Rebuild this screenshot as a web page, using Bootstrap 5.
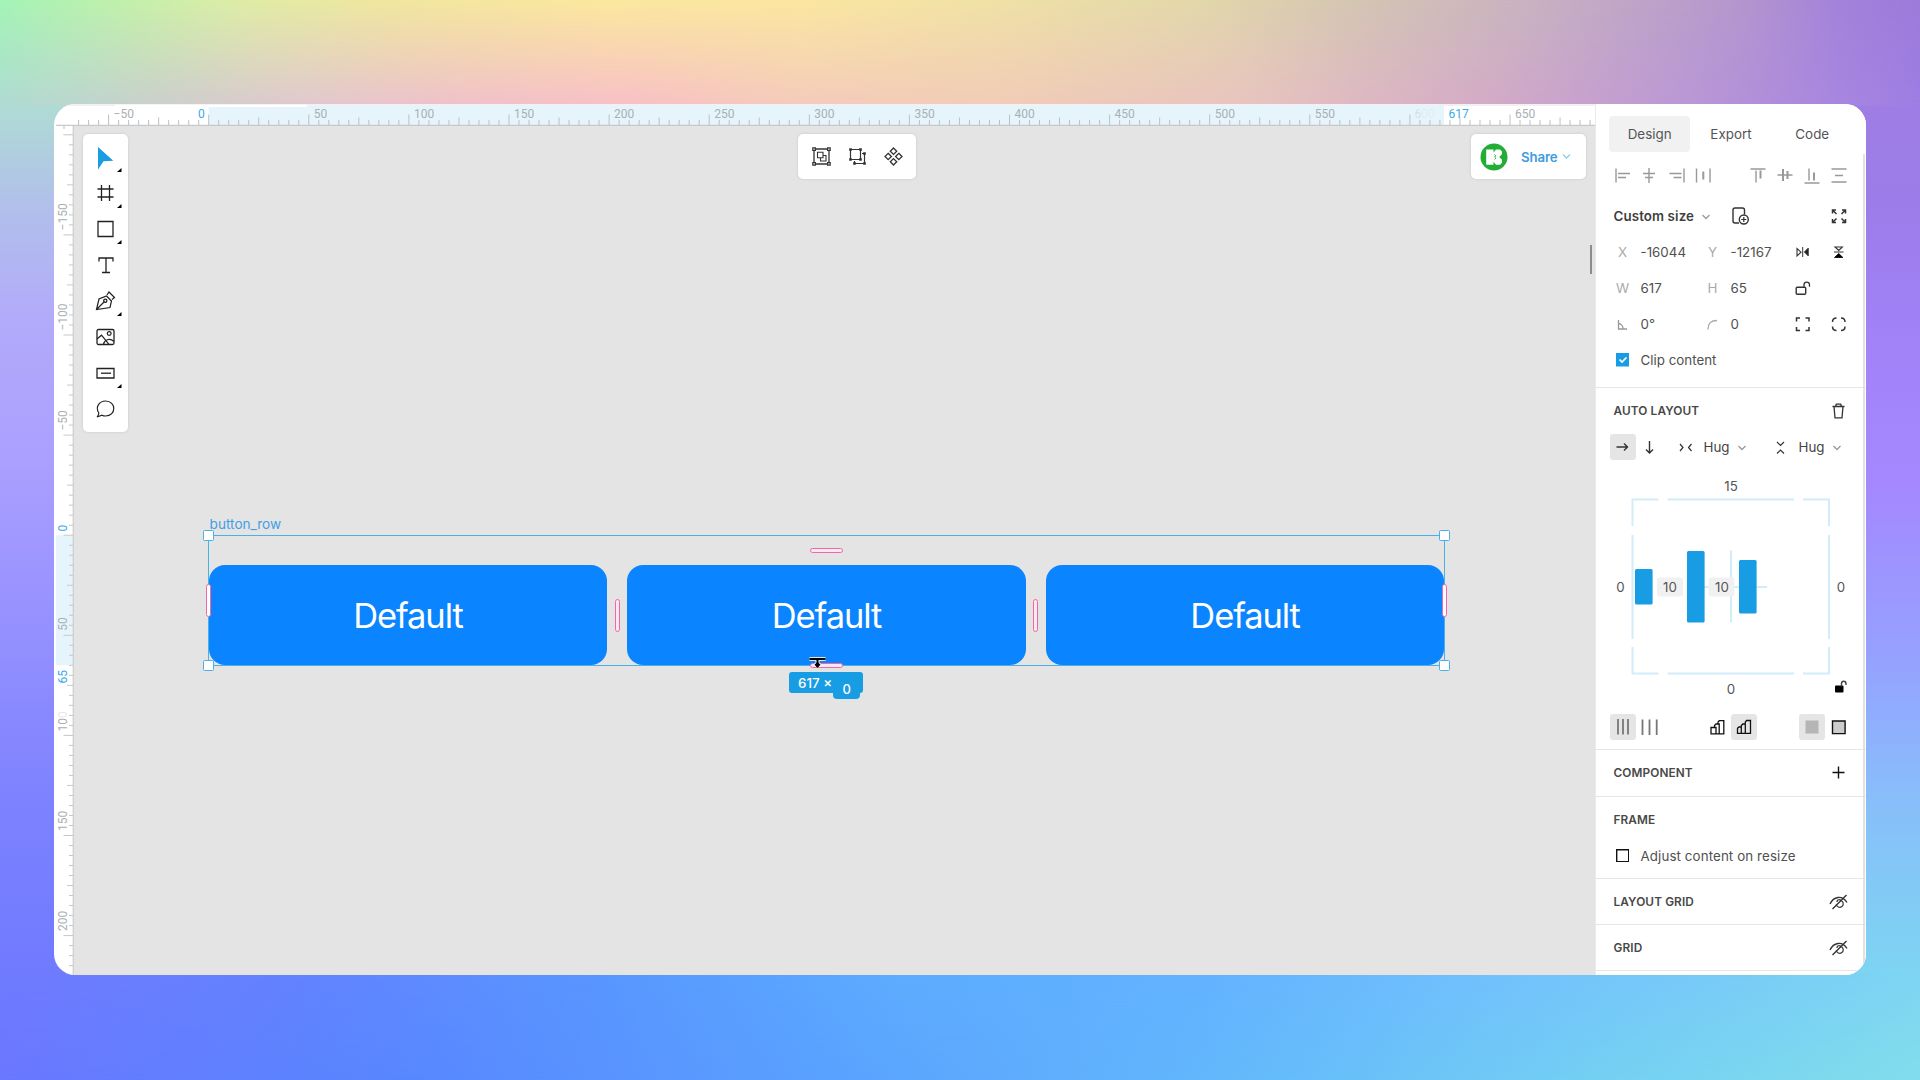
<!DOCTYPE html>
<html lang="en">
<head>
<meta charset="utf-8">
<title>Design editor</title>
<link href="https://cdn.jsdelivr.net/npm/bootstrap@5.3.0/dist/css/bootstrap.min.css" rel="stylesheet">
<style>
:root{--accent:#189ce4;--ink:#333;}
html,body{height:100%}
body{width:1920px;height:1080px;overflow:hidden;font-family:Inter,Roboto,sans-serif;font-size:13.35px;color:#4a4a4a;
 background:
 linear-gradient(180deg,rgb(175,220,212) 104px,rgb(177,193,233) 200px,rgb(178,170,250) 320px,rgb(172,160,255) 450px,rgb(150,145,255) 620px,rgb(125,130,255) 800px,rgb(112,122,255) 975px) left/50% 100% no-repeat,
 linear-gradient(180deg,rgb(158,126,228) 104px,rgb(156,124,232) 200px,rgb(161,130,247) 330px,rgb(165,135,255) 480px,rgb(150,160,255) 650px,rgb(136,190,250) 800px,rgb(125,212,242) 975px) right/50% 100% no-repeat;}
.glow{position:absolute;left:0;width:1920px;z-index:-1}
.glow::after{content:"";position:absolute;inset:0}
.glow-top{top:0;height:106px;background:linear-gradient(90deg,rgb(175,220,212),rgb(203,208,205) 150px,rgb(225,200,208) 300px,rgb(240,193,203) 450px,rgb(248,192,200) 620px,rgb(245,203,188) 800px,rgb(242,204,184) 1000px,rgb(232,196,192) 1250px,rgb(210,170,200) 1500px,rgb(185,150,215) 1700px,rgb(166,133,225) 1850px,rgb(158,126,228))}
.glow-top::after{background:linear-gradient(90deg,rgb(163,243,182),rgb(193,240,170) 122px,rgb(222,236,165) 245px,rgb(240,230,158) 390px,rgb(251,231,158) 600px,rgb(250,230,160) 800px,rgb(240,225,165) 980px,rgb(226,215,170) 1200px,rgb(212,197,178) 1350px,rgb(200,178,192) 1530px,rgb(180,150,205) 1740px,rgb(162,130,218) 1840px,rgb(155,122,218));-webkit-mask:linear-gradient(#000,transparent);mask:linear-gradient(#000,transparent)}
.glow-bottom{top:974px;height:106px;background:linear-gradient(90deg,rgb(106,120,255),rgb(88,135,255) 400px,rgb(90,160,255) 800px,rgb(98,183,252) 1200px,rgb(116,208,243) 1600px,rgb(130,222,236))}
.glow-bottom::after{background:linear-gradient(90deg,rgb(112,122,255),rgb(98,130,255) 300px,rgb(88,150,255) 600px,rgb(92,172,255) 900px,rgb(98,178,255) 1200px,rgb(113,193,252) 1500px,rgb(125,212,242));-webkit-mask:linear-gradient(#000,transparent);mask:linear-gradient(#000,transparent)}
.editor{margin:104px 54px 0;width:1812px;height:871px;border-radius:21px;overflow:hidden;background:#fff}
.ruler-text{font:12px Roboto,sans-serif;fill:#a9afb2}
.board{width:1521px;height:849px;background:#e4e4e4;overflow:hidden}
.floatbox{position:absolute;background:#fff;border-radius:5px;box-shadow:0 0 3px rgba(0,0,0,.13)}
.tools{left:9px;top:8px;width:45px;height:298px;padding-top:4.5px}
.tool-btn{width:45px;height:36.15px;margin-left:-.5px}
.quick{left:724px;top:8px;width:118px;height:45px;padding:0 5px}
.quick svg{margin:0 4.5px}
.share{left:1397px;top:8px;width:115px;height:45px;padding-left:8.5px}
.share-label{color:#3d9ce2;font-weight:600;margin:2px 5px 0 13.5px;font-size:13.2px;letter-spacing:-.1px}
.scrollstub{position:absolute;left:1516px;top:119px;width:2px;height:29px;background:#8c8c8c}
.artframe{position:absolute;left:134.6px;top:409px;width:1235.8px;height:130.2px}
.artframe .outline{position:absolute;left:-.5px;top:-.5px;right:-.5px;bottom:-1px;border:1.5px solid #49b0e8;pointer-events:none}
.art-label{position:absolute;left:1px;top:-20.5px;color:#3f9fe3;font-size:13.6px;line-height:18px;letter-spacing:0}
.art-btn{height:100px;border-radius:16px;background:#0a84ff;color:#fff;font-size:34.5px;font-weight:400;letter-spacing:-1.1px;padding-top:1px;flex:1 1 0}
.handle{position:absolute;width:11px;height:11px;background:#fff;border:1.5px solid #49b0e8;border-radius:1.5px}
.pill{position:absolute;background:#fbe9f1;border:1.4px solid #f067a6;border-radius:2.5px}
.pill-h{width:33px;height:5px}.pill-v{width:5px;height:33px}
.sizetag{position:absolute;left:580.5px;top:137px;width:74px;height:20.5px;background:var(--accent);color:#fff;border-radius:3px;padding-left:9px;line-height:22px;font-size:13.4px;font-weight:500}
.hinttag{position:absolute;left:624.5px;top:144.5px;width:27px;height:19px;background:var(--accent);color:#fff;border-radius:4px;line-height:19px;font-size:13px;text-align:center;font-weight:500}
.cursor-t{position:absolute;left:599px;top:121px}
.side{width:271px;border-left:1px solid #eaeaea;position:relative;background:#fff}
.side-scroll{position:absolute;right:1px;top:50px;bottom:0;width:2px;background:#e2e2e2}
.tab-item{width:81.3px;height:36px;border-radius:4px;font-size:13.4px;color:#555}
.tab-item.active{background:#f1f1f1}
.line36{height:36px;padding-left:13px}
.cell{width:27px;flex:none;text-align:center;padding-top:1px}
.cell27{width:27.1px;flex:none}
.val{width:63px;padding-left:4.5px;padding-top:1px;flex:none;white-space:nowrap;color:#505050}
.key{color:#aaa}
.head{font-weight:600;font-size:11.8px;color:#484848;padding-left:17.5px;padding-right:14px;letter-spacing:.12px}
.head span{padding-top:2px}
.rule{border-bottom:1.5px solid #e6e6e6}
.on{background:#e5e5e5;border-radius:3px}
svg{display:block;flex:none}
.ic{width:27px;height:27px;fill:none;stroke:#333;stroke-width:1.4}
.ic-soft{stroke:#999}
.tick-box{width:13.5px;height:13.5px;margin:0 6.75px}
.dia text{font:13.3px Inter,sans-serif;fill:#555;text-anchor:middle}
</style>
</head>
<body>
<div class="glow glow-top"></div><div class="glow glow-bottom"></div>
<main class="editor d-flex">
 <section class="d-flex flex-column">
  <svg id="rulerX" width="1541" height="22" viewBox="54 104 1541 22"></svg>
  <div class="d-flex">
   <svg id="rulerY" width="20" height="849" viewBox="54 126 20 849"></svg>
   <div class="board position-relative">
    <div class="floatbox tools d-flex flex-column" id="tools"></div>
    <div class="floatbox quick d-flex align-items-center">
     <svg class="ic" viewBox="0 0 27 27"><path d="M6 6h15v15H6z" stroke-width="1.3"/><g fill="#fff" stroke-width="1.2"><path d="M4.8 4.8h2.6v2.6H4.8zM19.6 4.8h2.6v2.6h-2.6zM4.8 19.6h2.6v2.6H4.8zM19.6 19.6h2.6v2.6h-2.6z"/></g><path d="M9.5 9.3h5.5v5.5H9.5zM12.5 15v3h5.5v-5.5H15" stroke-width="1.1"/></svg>
     <svg class="ic" viewBox="0 0 27 27"><path d="M6.5 6.5h10v10h-10zM18 10.5h2.5v10h-10V18" stroke-width="1.2"/><path d="M6.5 6.5h.01M16.5 6.5h.01M6.5 16.5h.01M16.5 16.5h.01M20.5 10.5h.01M10.5 20.5h.01M20.5 20.5h.01" stroke-width="2.6" stroke-linecap="square"/></svg>
     <svg class="ic" viewBox="0 0 27 27"><path d="M13.5 5l3.2 3.2-3.2 3.2-3.2-3.2zM13.5 15.6l3.2 3.2-3.2 3.2-3.2-3.2zM8.2 10.3l3.2 3.2-3.2 3.2L5 13.5zM18.8 10.3l3.2 3.2-3.2 3.2-3.2-3.2z" stroke-width="1.3"/></svg>
    </div>
    <div class="floatbox share d-flex align-items-center">
     <svg width="28" height="28" viewBox="0 0 28 28"><circle cx="14" cy="14" r="13.5" fill="#22ad37"/><path d="M6.2 6.5h7.3v3l2.5-3h4l2 2v2.7L19.2 14l2.8 2.7v3l-2 2h-4l-2.5-3v3H6.2z" fill="#fff"/><path d="M14.6 11.5l1.2 1.3-1.2 1.2M14.6 14l1.2 1.2-1.2 1.3" stroke="#22ad37" fill="none"/></svg>
     <span class="share-label">Share</span>
     <svg width="9" height="7" viewBox="0 0 9 7" fill="none" stroke="#8ccdf1" stroke-width="1.3"><path d="M1 1.5l3.500 3.500L8 1.5"/></svg>
    </div>
    <div class="scrollstub"></div>
    <div class="artframe d-flex flex-column justify-content-end">
     <span class="art-label">button_row</span>
     <div class="d-flex" style="gap:20px">
      <div class="art-btn d-flex align-items-center justify-content-center">Default</div>
      <div class="art-btn d-flex align-items-center justify-content-center">Default</div>
      <div class="art-btn d-flex align-items-center justify-content-center">Default</div>
     </div>
     <div class="outline"></div>
     <i class="handle" style="left:-5.5px;top:-5px"></i><i class="handle" style="right:-5.5px;top:-5px"></i>
     <i class="handle" style="left:-5.5px;bottom:-5.5px"></i><i class="handle" style="right:-5.5px;bottom:-5.5px"></i>
     <i class="pill pill-h" style="left:601px;top:13px"></i><i class="pill pill-h" style="left:601px;top:128px"></i>
     <i class="pill pill-v" style="left:-2.5px;top:49px;background:#fff"></i><i class="pill pill-v" style="right:-3px;top:49px;background:#fff"></i>
     <i class="pill pill-v" style="left:406px;top:64px"></i><i class="pill pill-v" style="left:824.5px;top:64px"></i>
     <div class="sizetag">617 ×</div><div class="hinttag">0</div>
     <svg class="cursor-t" width="20" height="14" viewBox="0 0 20 14"><path d="M1.5 3h16M9.5 3v8M6.5 9h6" stroke="#fff" stroke-width="4"/><path d="M1.5 3h16" stroke="#000" stroke-width="2.2"/><path d="M9.5 3v8" stroke="#000" stroke-width="2"/><path d="M9.5 5.8l3 3-3 3-3-3z"/></svg>
    </div>
   </div>
  </div>
 </section>

 <aside class="side">
  <div class="side-scroll"></div>
  <nav class="d-flex" style="padding:12px 0 0 13px">
   <div class="tab-item active d-flex align-items-center justify-content-center">Design</div>
   <div class="tab-item d-flex align-items-center justify-content-center">Export</div>
   <div class="tab-item d-flex align-items-center justify-content-center">Code</div>
  </nav>
  <div class="d-flex align-items-center" style="height:46px;padding-left:13px">
   <svg class="ic ic-soft" viewBox="0 0 27 27"><path d="M7 6.5v14M9 11.5h12M9 15.5h8"/></svg>
   <svg class="ic ic-soft" viewBox="0 0 27 27"><path d="M13 6v15M7 11.5h12M9 15.5h8"/></svg>
   <svg class="ic ic-soft" viewBox="0 0 27 27"><path d="M21 6.5v14M6.5 11.5h12M10.5 15.5h8"/></svg>
   <svg class="ic ic-soft" viewBox="0 0 27 27"><path d="M6.500 6.5v14M20 6.5v14"/><path d="M13.3 9.5v8" stroke-width="2"/></svg>
   <div class="cell27"></div>
   <svg class="ic ic-soft" viewBox="0 0 27 27"><path d="M6.5 7h15M12 8.5v12"/><path d="M16.5 8.5v8" stroke-width="2"/></svg>
   <svg class="ic ic-soft" viewBox="0 0 27 27"><path d="M6.5 13h15"/><path d="M12 7v12M16.500 9v8" stroke-width="2"/></svg>
   <svg class="ic ic-soft" viewBox="0 0 27 27"><path d="M6.5 21h15M11 6.5v12"/><path d="M16 10.5v8" stroke-width="2"/></svg>
   <svg class="ic ic-soft" viewBox="0 0 27 27"><path d="M6.5 7h15M6.5 20h15M10 13.5h8"/></svg>
  </div>
  <div class="line36 d-flex align-items-center">
   <b style="font-weight:600;color:#3f3f3f;width:83.5px;margin-left:4.5px;padding-top:1px;white-space:nowrap;letter-spacing:.1px">Custom size</b>
   <svg width="18" height="27" class="ic-soft" viewBox="0 0 18 27" fill="none" stroke-width="1.3"><path d="M5.5 12l3.5 3.5L12.500 12"/></svg>
   <svg class="ic" viewBox="0 0 27 27" style="margin:0 71px 0 12px"><path d="M12 20H8a2 2 0 0 1-2-2V7a2 2 0 0 1 2-2h7.5a2 2 0 0 1 2 2V11.500"/><circle cx="16.8" cy="16.5" r="4.5"/><path d="M16.8 14v5M14.3 16.5h5" stroke-width="1.2"/></svg>
   <svg class="ic" viewBox="0 0 27 27"><path d="M7.5 10.5V7H11M7.5 7l4 4M17 7h3.500V10.500M20.5 7l-4 4M7.5 16V19.500H11M7.5 19.500l4-4M17 19.500h3.5v-3.5M20.5 19.500l-4-4" stroke-width="1.5"/></svg>
  </div>
  <div class="line36 d-flex align-items-center">
   <div class="cell key">X</div><div class="val">-16044</div><div class="cell key">Y</div><div class="val">-12167</div>
   <svg class="ic" viewBox="0 0 27 27"><path d="M8 9.5v7.4l4-3.7z" stroke-width="1.1"/><path d="M13.7 8v10" stroke-width="1"/><path d="M19.3 9v8l-4-4z" fill="#222" stroke-width=".8"/></svg>
   <svg class="ic" viewBox="0 0 27 27" style="margin-left:9px"><path d="M10 8h7.4l-3.7 3.5z" stroke-width="1.1"/><path d="M9 13h9.500" stroke-width="1"/><path d="M9.5 18.500h8.4l-4.2-4z" fill="#000" stroke="#000" stroke-width=".8"/></svg>
  </div>
  <div class="line36 d-flex align-items-center">
   <div class="cell key">W</div><div class="val">617</div><div class="cell key">H</div><div class="val">65</div>
   <svg class="ic" viewBox="0 0 27 27"><rect x="7.2" y="12.3" width="9.5" height="7" rx="1"/><path d="M15 12.3V9.800a2.7 2.7 0 0 1 5.5 0v2" stroke-width="1.3"/></svg>
  </div>
  <div class="line36 d-flex align-items-center">
   <svg class="ic ic-soft" viewBox="0 0 27 27"><path d="M9.5 9v9h8.500M9.5 12.5a5 5 0 0 1 4.5 5" stroke-width="1.3"/></svg><div class="val">0°</div>
   <svg class="ic" viewBox="0 0 27 27"><path d="M9 18.5c0-6 2.5-9 9-9" stroke="#aaa" stroke-width="1.3"/></svg><div class="val">0</div>
   <svg class="ic" viewBox="0 0 27 27"><path d="M7.500 10.5V7h3.5M16.500 7h3.5v3.500M20 16v3.5h-3.5M11 19.5H7.5V16" stroke-width="1.5"/></svg>
   <svg class="ic" viewBox="0 0 27 27" style="margin-left:9px"><path d="M7.5 11c0-2.5 1.5-4 4-4M16 7c2.5 0 4 1.5 4 4M20 15.5c0 2.5-1.5 4-4 4M11.5 19.5c-2.5 0-4-1.5-4-4" stroke-width="1.5"/></svg>
  </div>
  <div class="line36 d-flex align-items-center">
   <svg class="tick-box" viewBox="0 0 13.5 13.5"><path fill="#189ce4" d="M0 0h13.5v13.5H0z"/><path d="M3.500 6.500L6 9l4.500-4.500" fill="none" stroke="#fff" stroke-width="1.7"/></svg><div class="val">Clip content</div>
  </div>
  <div class="rule" style="height:10px"></div>

  <div class="head d-flex align-items-center justify-content-between" style="height:36px;margin-top:5px"><span>AUTO LAYOUT</span>
   <svg class="ic" viewBox="0 0 27 27"><path d="M7.500 8.500h12M10.500 8.500l.8-2.300h4.400l.8 2.300M9 8.500l1 11.300h7l1-11.300" stroke-width="1.3"/></svg></div>
  <div class="line36 d-flex align-items-center" style="padding-left:13.5px">
   <svg class="ic on" style="width:26px;height:26px" viewBox="0 0 26 26"><path d="M6.500 13h11M14 9.500l3.500 3.500-3.500 3.500"/></svg>
   <svg class="ic" viewBox="0 0 27 27"><path d="M13.500 7v12M10 15.500l3.500 3.500 3.500-3.500"/></svg>
   <svg class="ic" viewBox="0 0 27 27" style="margin-left:9px"><path d="M8 10l3 3.500L8 17M19.500 10l-3 3.500 3 3.500" stroke-width="1.2"/></svg>
   <span style="width:30px;margin-left:5px;color:#444">Hug</span>
   <svg width="18" height="27" class="ic-soft" viewBox="0 0 18 27" fill="none" stroke-width="1.3"><path d="M4.500 12l3.500 3.500L11.500 12"/></svg>
   <svg class="ic" viewBox="0 0 27 27" style="margin-left:15px"><path d="M10 8l3.500 3.500L17 8M10 19.500l3.500-3.500 3.500 3.500" stroke-width="1.2"/></svg>
   <span style="width:30px;margin-left:5px;color:#444">Hug</span>
   <svg width="18" height="27" class="ic-soft" viewBox="0 0 18 27" fill="none" stroke-width="1.3"><path d="M4.500 12l3.500 3.500L11.500 12"/></svg>
  </div>
  <svg class="dia" width="269" height="244" viewBox="1596 465 269 244">
   <g fill="none" stroke="#d3ecf9" stroke-width="2"><path d="M1632.5 526v-26.500h26M1667.5 499.500h126.500M1803 499.500h26V526M1632.500 535v104M1829 535v104M1632.500 647v26.500h26M1667.500 673.500h126.500M1803 673.500h26V647M1731 550.500v72M1704 587h63"/></g>
   <g fill="#189ce4"><rect x="1635" y="569" width="17.6" height="35.5" rx="1.5"/><rect x="1687" y="551" width="17.6" height="71.5" rx="1.5"/><rect x="1739" y="560" width="17.6" height="53.5" rx="1.5"/></g>
   <g fill="#f1f1f1"><rect x="1657" y="577.5" width="26" height="19" rx="3"/><rect x="1708.5" y="577.5" width="26" height="19" rx="3"/></g>
   <text x="1731" y="490.5">15</text><text x="1670" y="592">10</text><text x="1722" y="592">10</text><text x="1620.5" y="592">0</text><text x="1841" y="592">0</text><text x="1731" y="693.5">0</text>
   <rect x="1835" y="685.500" width="8.5" height="7" rx="1"/><path d="M1841.5 686.500v-3a2.2 2.2 0 0 1 4.5 0v1.500" fill="none" stroke="#444" stroke-width="1.4"/>
  </svg>
  <div class="line36 d-flex align-items-center" style="padding-left:13.5px">
   <svg class="ic on" style="width:26px;height:26px" viewBox="0 0 26 26"><path d="M8 5v15.500M13 5v15.500M18 5v15.500" stroke="#777" stroke-width="1.8"/></svg>
   <svg class="ic" viewBox="0 0 27 27"><path d="M6.500 5.500v15.500M13.500 5.500v15.500M20.700 5.500v15.500" stroke="#777" stroke-width="1.8"/></svg>
   <svg class="ic" viewBox="0 0 27 27" style="margin-left:41px"><path d="M7 13.500h5v6.300H7zM10.500 13.500v-2l1.500-1.500h3.200v9.800H12M14 10V8l1.300-1.300h4.500v13.100h-4.600" stroke="#111" stroke-width="1.3"/></svg>
   <svg class="ic on" style="width:26px;height:26px;margin-left:.5px" viewBox="0 0 26 26"><path d="M6.500 19.300v-5L8 13h2.300v6.300zM10.300 19.300V11.500L11.800 10h2.500v9.300zM14.300 19.300V8l1.300-1.500h3.900v12.800z" stroke="#111" stroke-width="1.3"/></svg>
   <svg class="ic on" style="width:26px;height:26px;margin-left:41.5px" viewBox="0 0 26 26"><path d="M6.500 6.500h13v13h-13z" fill="#b5b5b5" stroke="none"/></svg>
   <svg class="ic" viewBox="0 0 27 27" style="margin-left:.5px"><path d="M7.500 7h12.600v12.600H7.500z" fill="#ccc" stroke="#111"/></svg>
  </div>
  <div class="rule" style="height:5px"></div>
  <div class="head rule d-flex align-items-center justify-content-between" style="height:46.5px"><span>COMPONENT</span>
   <svg class="ic" viewBox="0 0 27 27"><path d="M7.500 13.500h12M13.500 7.500v12" stroke="#111"/></svg></div>
  <div class="head d-flex align-items-center" style="height:46px"><span>FRAME</span></div>
  <div class="line36 rule d-flex" style="padding-top:5px">
   <svg class="tick-box" style="margin-top:1px" viewBox="0 0 13.5 13.5"><path fill="none" stroke="#111" stroke-width="1.4" d="M.7.7h12v12H.7z"/></svg><div class="val" style="line-height:16px;padding-top:0;letter-spacing:.1px">Adjust content on resize</div>
  </div>
  <div class="head rule d-flex align-items-center justify-content-between" style="height:46px"><span style="padding-top:3px">LAYOUT GRID</span>
   <svg class="ic" viewBox="0 0 27 27"><path d="M5 16c3.500-7.500 12-9.500 17-1.500M21.500 7L7.500 21"/><path d="M16.800 13a3.500 3.500 0 1 1-5.500 3.500M16 13.500a2 2 0 0 0-4 .5" stroke-width="1.2"/></svg></div>
  <div class="head rule d-flex align-items-center justify-content-between" style="height:46.5px"><span style="padding-top:3px">GRID</span>
   <svg class="ic" viewBox="0 0 27 27"><path d="M5 16c3.500-7.500 12-9.500 17-1.500M21.500 7L7.500 21"/><path d="M16.800 13a3.500 3.500 0 1 1-5.500 3.500M16 13.500a2 2 0 0 0-4 .5" stroke-width="1.2"/></svg></div>
 </aside>
</main>
<script src="https://cdn.jsdelivr.net/npm/bootstrap@5.3.0/dist/js/bootstrap.bundle.min.js"></script>
<script>
// toolbar: [icon markup, has submenu]
const tools=[
 ['<path d="M6 3.500v22.500l5.500-8.300 9.800-.4z" fill="#189ce4" stroke="none"/>',1],
 ['<path d="M5.500 9.500h16M5.500 17.500h16M9.500 5.500v16M17.500 5.500v16"/>',1],
 ['<path d="M6 6h15v15H6z"/>',1],
 ['<path d="M7 10V6.500h14V10M14 6.500V21M10 21h8" stroke-width="1.3"/>',0],
 ['<path d="M4.500 22L7 11.500l7.500-3 5 5L18 20zM4.500 22l8-8M15 7.500l2-3 5.500 5.500-2.500 2" stroke-width="1.2"/><circle cx="13.300" cy="13.300" r="1.600"/>',1],
 ['<rect x="5" y="6" width="17" height="15" rx="1.5"/><circle cx="17.200" cy="10" r="1.900" stroke-width="1.2"/><path d="M5 15.500l4.500-3.800L17 20.800M11.500 20.500c1-4 6-6.500 10.500-2.500" stroke-width="1.2"/>',0],
 ['<path d="M5 9h17v9.500H5z"/><path d="M9 13.700h10"/>',1],
 ['<path d="M6.800 17.500C2.500 10.500 8.500 5.500 13.500 5.500c11 0 11 15 0 15-1.500 0-2.500-.3-3.500-.8l-5 1.800c1.500-1.300 1.800-2.500 1.800-4z" stroke-width="1.2"/>',0]];
document.getElementById('tools').innerHTML=tools.map(([p,m])=>`<svg class="tool-btn" viewBox="-9 -4.500 45 36.150" fill="none" stroke="#222" stroke-width="1.3">${p}${m?'<path d="M29.500 24.500v4H25z" fill="#000" stroke="none"/>':''}</svg>`).join('');

// rulers: 1 canvas unit = 2.002px, origin at the selected frame's corner
const K=2.002,OX=208.7,OY=535.2;
let h='<path d="M54 104h1541v2H54z" fill="#f1f0f2"/><path d="M115 104.800h192v2H115z" fill="#fff"/><path d="M208.700 107h98.300v-1.500h1137v19.500H208.700z" fill="#e6f5fc"/><path d="M56 125.300h1539" stroke="#c9c9c9" stroke-width="1.3"/>';
for(let u=-65;u<=690;u+=5){const x=OX+u*K;if(x>1594)break;const l=u%50===0?10.5:u%25===0?7.5:5;
 h+=`<path d="M${x} ${125-l}V125" stroke="#bac2c5"/>`;
 if(u%50===0&&u!==0&&u!==600)h+=`<text class="ruler-text" x="${x+5}" y="118">${u<0?'−'+-u:u}</text>`;}
h+='<text class="ruler-text" x="198" y="118" style="fill:#3aa9ea">0</text><text class="ruler-text" x="1448.5" y="118" style="fill:#3aa9ea">617</text><text class="ruler-text" x="1414.5" y="118" style="fill:#d3e2e9">6<tspan opacity=".4">00</tspan></text>';
document.getElementById('rulerX').innerHTML=h;
let v='<path d="M56 535.200h17v130H56z" fill="#e6f5fc"/><path d="M73.300 126v849" stroke="#cfcfcf" stroke-width="1.3"/><path d="M64 126v3" stroke="#bbb"/>';
const t=(y,s,c='')=>`<text class="ruler-text" transform="translate(67 ${y}) rotate(-90)" ${c}>${s}</text>`;
for(let u=-200;u<=220;u+=5){const y=OY+u*K;if(y<127||y>974)continue;const l=u%50===0?9.5:u%25===0?6:4;
 v+=`<path d="M${73-l} ${y}H73" stroke="#c4c8ca"/>`;
 if(u%50===0&&u!==0&&u!==100&&u!==-200)v+=t(y-4.5,u<0?'−'+-u:u);}
v+=t(531.5,'0','style="fill:#3aa9ea"')+t(683.5,'65','style="fill:#3aa9ea"')+t(731.5,'10<tspan opacity=".3">0</tspan>');
document.getElementById('rulerY').innerHTML=v;
</script>
</body>
</html>
